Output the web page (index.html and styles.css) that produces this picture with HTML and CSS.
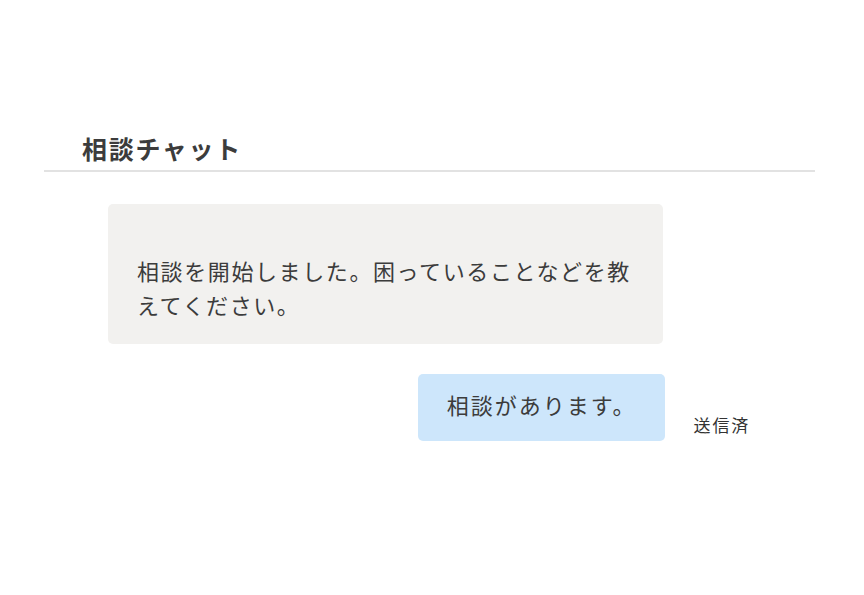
FILE: index.html
```html
<!DOCTYPE html>
<html lang="ja">
<head>
<meta charset="utf-8">
<link rel="stylesheet" href="styles.css">
</head>
<body>
<div class="chat">
  <div class="chat-header">
    <h1 class="chat-title">相談チャット</h1>
  </div>
  <div class="messages">
    <div class="row row-left">
      <div class="bubble bubble-gray">相談を開始しました。困っていることなどを教えてください。</div>
    </div>
    <div class="row row-right">
      <div class="bubble bubble-blue">相談があります。</div>
      <span class="status">送信済</span>
    </div>
  </div>
</div>
</body>
</html>
```
FILE: styles.css
```css
html, body {
  margin: 0;
  padding: 0;
  background: #ffffff;
}
body {
  font-family: "Noto Sans CJK JP", "Noto Sans", sans-serif;
  color: #3a3a3a;
}
.chat {
  padding: 130px 49px 0 44px;
}
.chat-header {
  border-bottom: 2px solid #e2e2e2;
  padding: 0 0 4px 38px;
}
.chat-title {
  margin: 0;
  font-size: 25px;
  line-height: 36px;
  font-weight: 700;
  color: #3c3c3c;
  letter-spacing: 1.7px;
}
.messages {
  display: flex;
  flex-direction: column;
  gap: 30px;
  padding-top: 32px;
}
.row {
  display: flex;
}
.row-left {
  padding-left: 64px;
}
.row-right {
  justify-content: flex-end;
  padding-right: 65px;
  gap: 29px;
}
.bubble {
  border-radius: 5px;
  font-size: 22px;
  letter-spacing: 1.6px;
  color: #3c3c3c;
}
.bubble-gray {
  width: 555px;
  box-sizing: border-box;
  background: #f2f1ef;
  padding: 49px 29px 23px 29px;
  line-height: 34px;
}
.bubble-blue {
  background: #cde6fb;
  padding: 13px 28px 20px 29px;
  line-height: 34px;
  letter-spacing: 2px;
}
.status {
  align-self: flex-end;
  margin-bottom: 4px;
  font-size: 17px;
  letter-spacing: 1.8px;
  color: #333;
}
```
